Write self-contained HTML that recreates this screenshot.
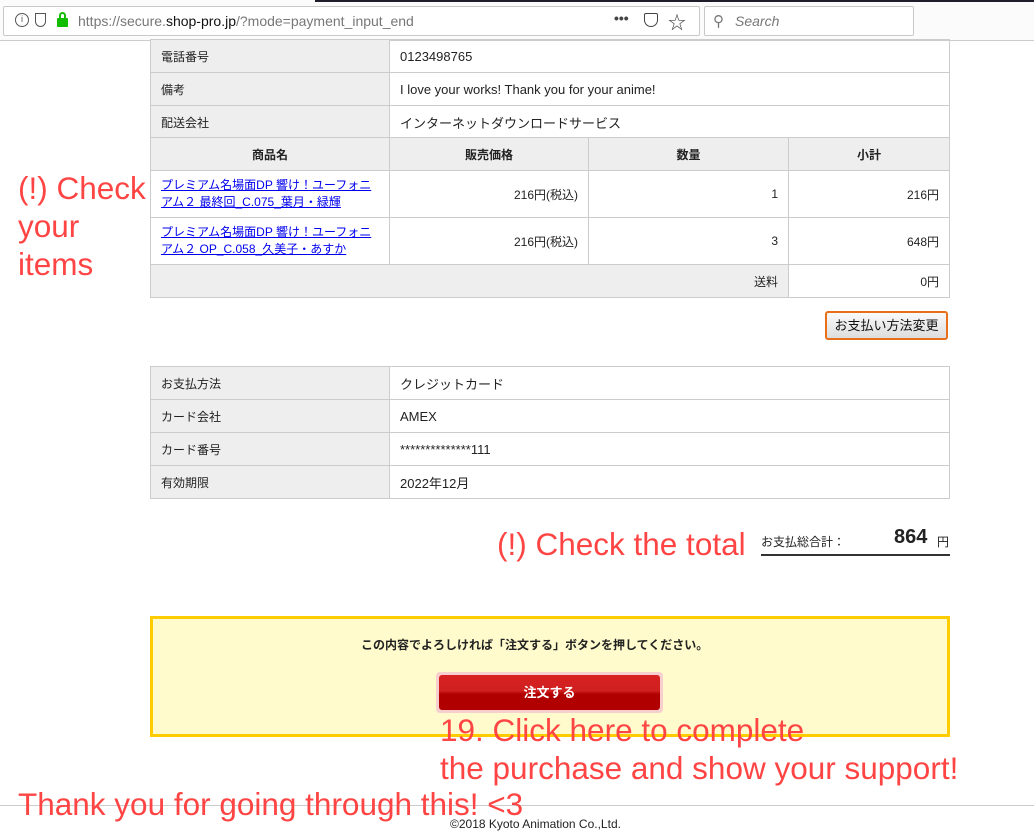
<!DOCTYPE html>
<html><head><meta charset="utf-8"><style>
*{margin:0;padding:0;box-sizing:border-box}
body{width:1034px;height:836px;position:relative;overflow:hidden;background:#fff;font-family:"Liberation Sans","Noto Sans CJK JP",sans-serif;font-size:12px;color:#222}
.a{position:absolute}
.chrome{left:0;top:0;width:1034px;height:41px;background:#fbfbfb;border-bottom:1px solid #ccc}
.url{left:3px;top:6px;width:697px;height:30px;background:#fff;border:1px solid #c8c8c8;border-radius:2px}
.srch{left:704px;top:6px;width:210px;height:30px;background:#fff;border:1px solid #c8c8c8;border-radius:2px}
table{border-collapse:collapse;position:absolute;left:150px;width:800px}
td{border:1px solid #ccc;padding:0 10px;height:33px;vertical-align:middle}
td.l{background:#eee;width:239px}
.c{border-left:1px dotted #ccc}
a{color:#00e}
.r{color:#f44;font-size:31.5px;line-height:38px;position:absolute;white-space:nowrap}
</style></head><body>
<div class="a chrome"></div>
<div class="a" style="left:315px;top:0;width:719px;height:2px;background:#1d1d2b"></div>
<div class="a url">
<span class="a" style="left:11px;top:6px;width:14px;height:14px;border:1.5px solid #555;border-radius:50%;font-size:9px;text-align:center;line-height:11px;color:#555">i</span>
<span class="a" style="left:31px;top:6px;width:11px;height:14px;border:1.5px solid #555;border-radius:0 0 6px 6px"></span>
<span class="a" style="left:53px;top:11px;width:11px;height:9px;background:#12bc00;border-radius:1px"></span>
<span class="a" style="left:55px;top:5px;width:7px;height:8px;border:2px solid #12bc00;border-bottom:none;border-radius:4px 4px 0 0"></span>
<span class="a" style="left:74px;top:6px;font-size:14px;color:#777">https://secure.<span style="color:#111">shop-pro.jp</span>/?mode=payment_input_end</span>
<span class="a" style="left:610px;top:3px;font-size:14px;color:#444;font-weight:bold">•••</span>
<span class="a" style="left:640px;top:6px;width:14px;height:14px;border:1.5px solid #444;border-radius:2px 2px 7px 7px"></span>
<span class="a" style="left:664px;top:2px;font-size:18px;color:#444">☆</span>
</div>
<div class="a srch"><span class="a" style="left:8px;top:5px;font-size:15px;color:#777">⚲</span><span class="a" style="left:30px;top:6px;font-size:14px;color:#777;font-style:italic">Search</span></div>

<table style="top:39px">
<tr><td class="l">電話番号</td><td style="font-size:13px">0123498765</td></tr>
<tr><td class="l">備考</td><td style="font-size:13px">I love your works! Thank you for your anime!</td></tr>
<tr><td class="l">配送会社</td><td style="font-size:13px">インターネットダウンロードサービス</td></tr>
</table>
<table style="top:137px">
<tr style="background:#eee;font-weight:bold;text-align:center"><td style="width:239px">商品名</td><td style="width:199px" class="c">販売価格</td><td style="width:200px" class="c">数量</td><td class="c">小計</td></tr>
<tr style="height:47px"><td style="line-height:17px"><a href="#">プレミアム名場面DP 響け！ユーフォニアム２ 最終回_C.075_葉月・緑輝</a></td><td class="c" style="text-align:right">216円(税込)</td><td class="c" style="text-align:right">1</td><td class="c" style="text-align:right">216円</td></tr>
<tr style="height:47px"><td style="line-height:17px"><a href="#">プレミアム名場面DP 響け！ユーフォニアム２ OP_C.058_久美子・あすか</a></td><td class="c" style="text-align:right">216円(税込)</td><td class="c" style="text-align:right">3</td><td class="c" style="text-align:right">648円</td></tr>
<tr style="background:#eee"><td colspan="3" style="text-align:right">送料</td><td style="text-align:right;background:#fff">0円</td></tr>
</table>
<div class="a" style="left:825px;top:311px;width:123px;height:29px;border:2px solid #e8701a;border-radius:3px;background:linear-gradient(#fafafa,#ddd);font-size:13px;text-align:center;line-height:25px;color:#111">お支払い方法変更</div>
<table style="top:366px">
<tr><td class="l">お支払方法</td><td style="font-size:13px">クレジットカード</td></tr>
<tr><td class="l">カード会社</td><td style="font-size:13px">AMEX</td></tr>
<tr><td class="l">カード番号</td><td style="font-size:13px">**************111</td></tr>
<tr><td class="l">有効期限</td><td style="font-size:13px">2022年12月</td></tr>
</table>
<div class="a" style="left:761px;top:533px;font-size:12px">お支払総合計：</div>
<div class="a" style="left:894px;top:526px;font-size:20px;font-weight:bold">864</div>
<div class="a" style="left:937px;top:533px;font-size:12px">円</div>
<div class="a" style="left:761px;top:554px;width:189px;height:2px;background:#333"></div>

<div class="a" style="left:150px;top:616px;width:800px;height:121px;background:#fffbcc;border:3px solid #fc0"></div>
<div class="a" style="left:361px;top:636px;font-size:12px;font-weight:bold;color:#222">この内容でよろしければ「注文する」ボタンを押してください。</div>
<div class="a" style="left:436px;top:672px;width:227px;height:41px;background:#f8cfcf;border-radius:4px"></div>
<div class="a" style="left:439px;top:675px;width:221px;height:35px;background:linear-gradient(#d82020 0%,#d02020 45%,#b00000 55%,#b00000 100%);border-radius:3px;color:#fff;font-weight:bold;font-size:13px;text-align:center;line-height:35px">注文する</div>

<div class="a" style="left:0;top:805px;width:1034px;height:1px;background:#ccc"></div>
<div class="a" style="left:450px;top:817px;font-size:12px;color:#222">©2018 Kyoto Animation Co.,Ltd.</div>

<div class="r" style="left:18px;top:169px">(!) Check<br>your<br>items</div>
<div class="r" style="left:497px;top:525px">(!) Check the total</div>
<div class="r" style="left:440px;top:711px">19. Click here to complete<br>the purchase and show your support!</div>
<div class="r" style="left:18px;top:785px">Thank you for going through this! &lt;3</div>
</body></html>
